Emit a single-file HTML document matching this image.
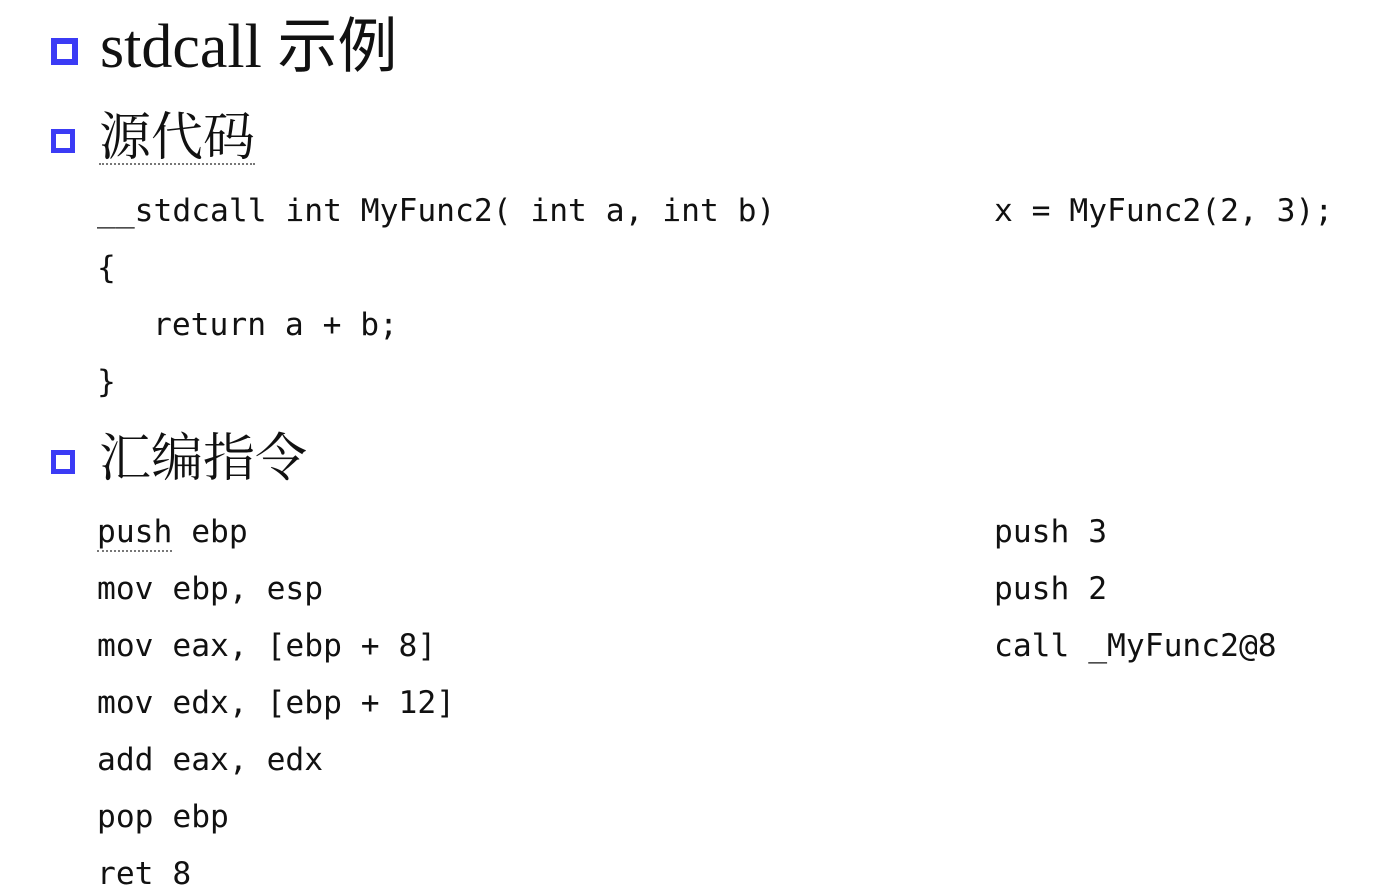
<!DOCTYPE html>
<html><head><meta charset="utf-8"><style>
body{margin:0;width:1399px;height:879px;background:#fff;overflow:hidden;position:relative}
.a{position:absolute;white-space:pre;line-height:1}
.b{position:absolute;border:5px solid #3b3bf5;box-sizing:border-box;background:#fff}
.m{font-family:"DejaVu Sans Mono","Liberation Mono",monospace;font-size:31.3px;color:#111}
.s{font-family:"Liberation Serif","Noto Serif CJK SC",serif;color:#111}
.u{border-bottom:2px dotted #777}
</style></head><body>
<div class="b" style="left:51px;top:38px;width:27px;height:27px;border-width:6px"></div>
<div class="a s" style="left:100px;top:12px;font-size:62px">stdcall <span style="font-family:'Noto Sans CJK SC',sans-serif;font-size:60px;font-weight:400">示例</span></div>
<div class="b" style="left:51px;top:129px;width:24px;height:24px"></div>
<div class="a s" style="left:99px;top:113px;font-size:52px"><span class="u" style="display:inline-block;line-height:48px">源代码</span></div>
<div class="a m" style="left:97px;top:196px">__stdcall int MyFunc2( int a, int b)</div>
<div class="a m" style="left:994px;top:196px">x = MyFunc2(2, 3);</div>
<div class="a m" style="left:97px;top:253px">{</div>
<div class="a m" style="left:153px;top:310px">return a + b;</div>
<div class="a m" style="left:97px;top:367px">}</div>
<div class="b" style="left:51px;top:450px;width:24px;height:24px"></div>
<div class="a s" style="left:99px;top:434px;font-size:52px">汇编指令</div>
<div class="a m" style="left:97px;top:517px"><span class="u">push</span> ebp</div>
<div class="a m" style="left:97px;top:574px">mov ebp, esp</div>
<div class="a m" style="left:97px;top:631px">mov eax, [ebp + 8]</div>
<div class="a m" style="left:97px;top:688px">mov edx, [ebp + 12]</div>
<div class="a m" style="left:97px;top:745px">add eax, edx</div>
<div class="a m" style="left:97px;top:802px">pop ebp</div>
<div class="a m" style="left:97px;top:859px">ret 8</div>
<div class="a m" style="left:994px;top:517px">push 3</div>
<div class="a m" style="left:994px;top:574px">push 2</div>
<div class="a m" style="left:994px;top:631px">call _MyFunc2@8</div>
</body></html>
